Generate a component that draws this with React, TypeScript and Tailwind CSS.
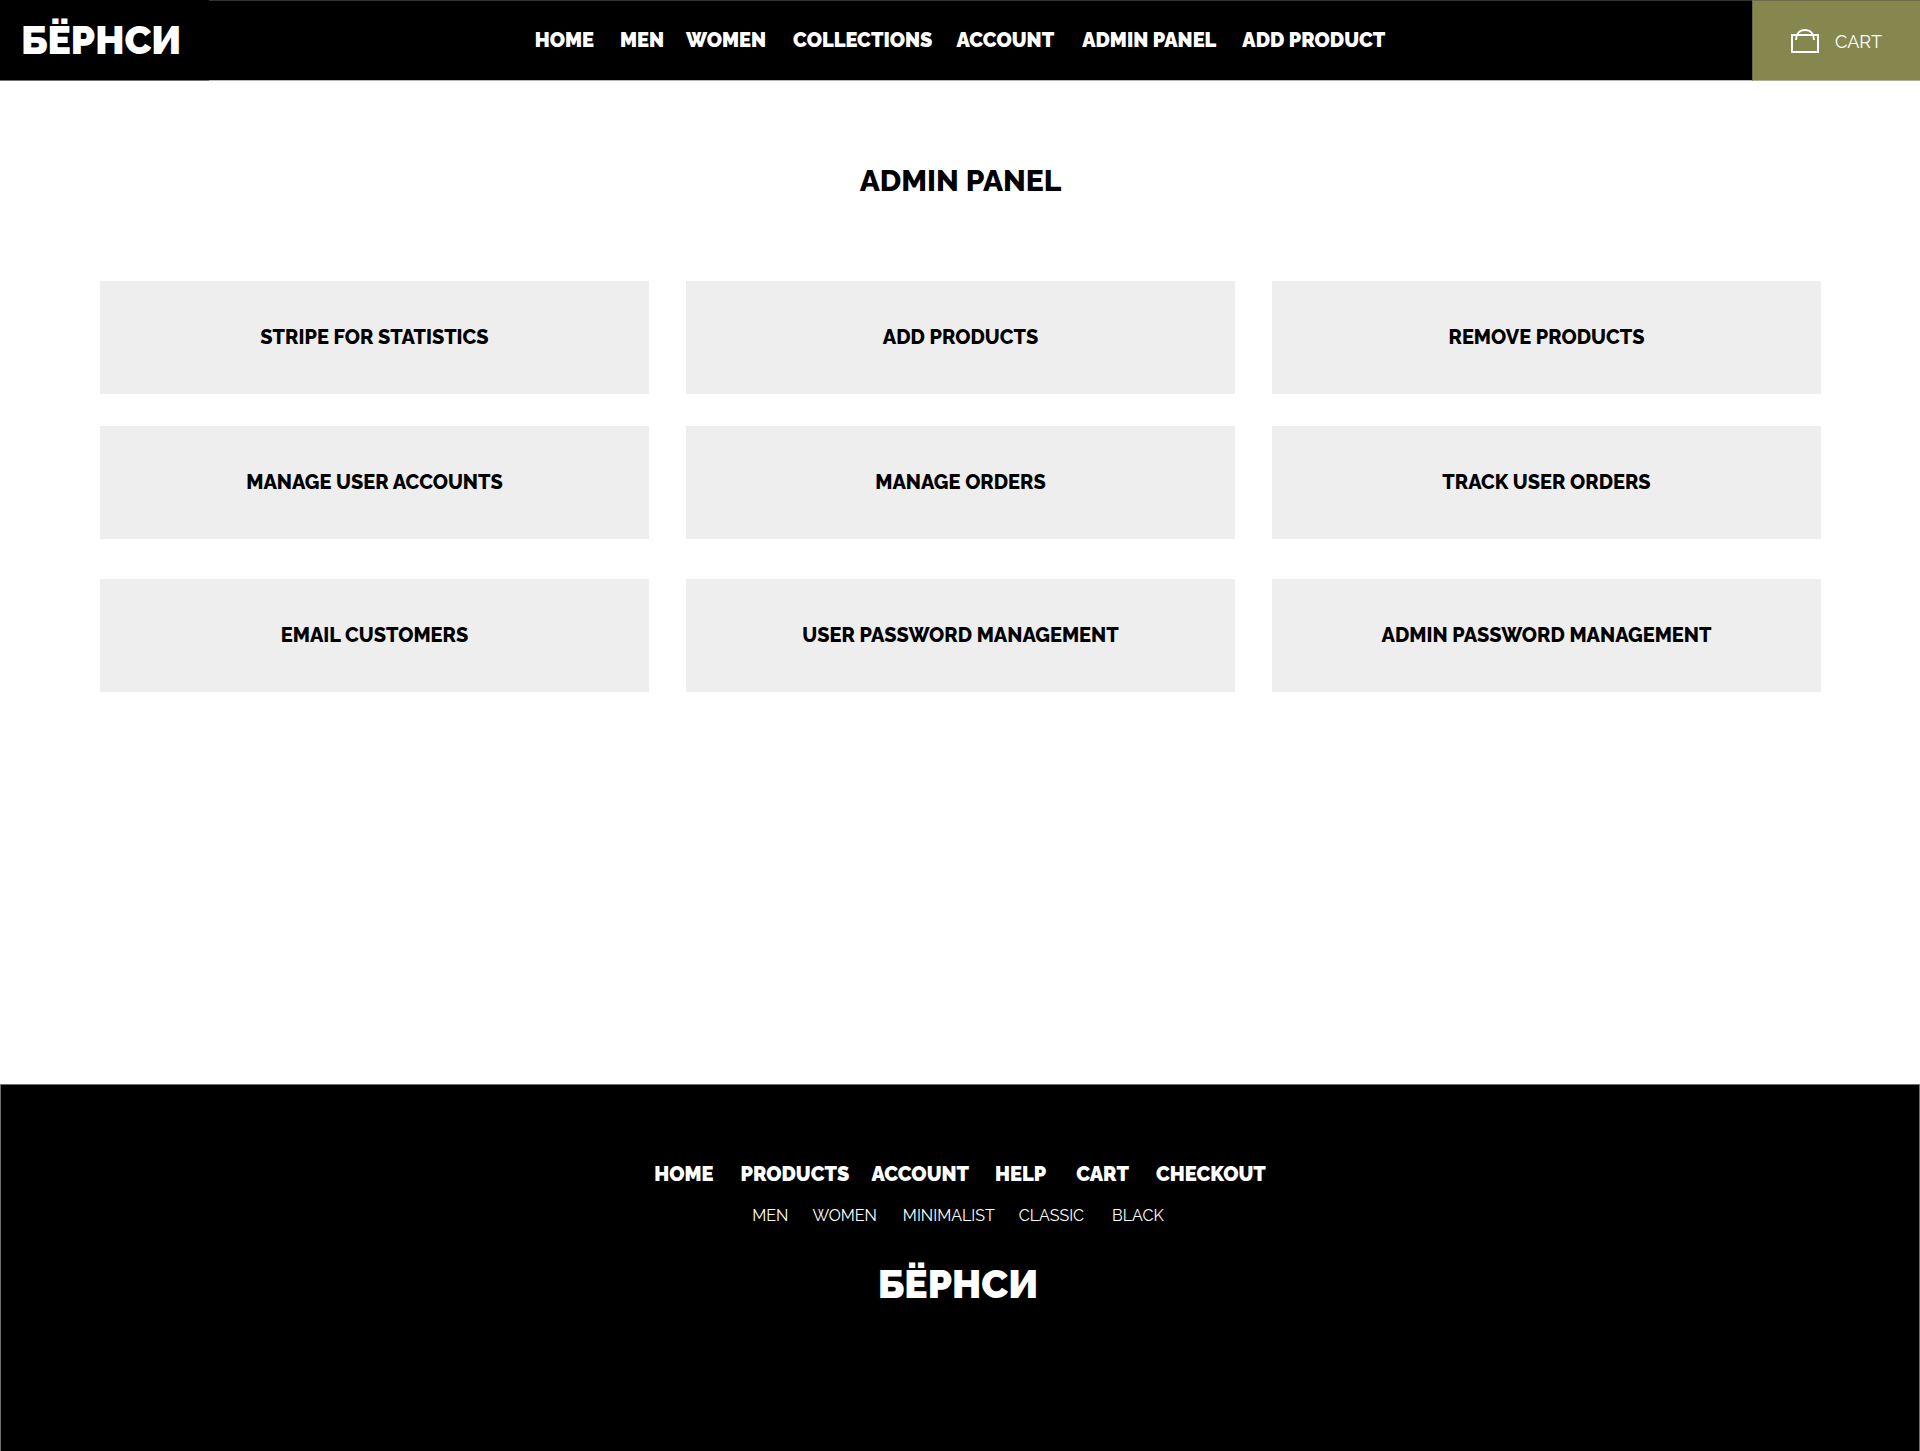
type Item = { label: string; gap: string };

const mainNav: Item[] = [
  { label: "HOME", gap: "" },
  { label: "MEN", gap: "ml-[26px]" },
  { label: "WOMEN", gap: "ml-[22px]" },
  { label: "COLLECTIONS", gap: "ml-[27px]" },
  { label: "ACCOUNT", gap: "ml-6" },
  { label: "ADMIN PANEL", gap: "ml-7" },
  { label: "ADD PRODUCT", gap: "ml-[26px]" },
];

const cardRows = [
  { spacing: "", labels: ["STRIPE FOR STATISTICS", "ADD PRODUCTS", "REMOVE PRODUCTS"] },
  { spacing: "mt-8", labels: ["MANAGE USER ACCOUNTS", "MANAGE ORDERS", "TRACK USER ORDERS"] },
  { spacing: "mt-10", labels: ["EMAIL CUSTOMERS", "USER PASSWORD MANAGEMENT", "ADMIN PASSWORD MANAGEMENT"] },
];

const footerNav: Item[] = [
  { label: "HOME", gap: "" },
  { label: "PRODUCTS", gap: "ml-[27px]" },
  { label: "ACCOUNT", gap: "ml-[22px]" },
  { label: "HELP", gap: "ml-[26px]" },
  { label: "CART", gap: "ml-[30px]" },
  { label: "CHECKOUT", gap: "ml-[27px]" },
];

const footerSubNav: Item[] = [
  { label: "MEN", gap: "" },
  { label: "WOMEN", gap: "ml-6" },
  { label: "MINIMALIST", gap: "ml-[26px]" },
  { label: "CLASSIC", gap: "ml-6" },
  { label: "BLACK", gap: "ml-7" },
];

function NavRow({ items, label, className }: { items: Item[]; label: string; className: string }) {
  return (
    <nav aria-label={label} className={`flex items-center whitespace-nowrap ${className}`}>
      {items.map((item) => (
        <a key={item.label} href="#" className={`hover:underline ${item.gap}`}>
          {item.label}
        </a>
      ))}
    </nav>
  );
}

function BagIcon() {
  return (
    <svg aria-hidden="true" width="28" height="24" viewBox="0 0 28 24" fill="none" stroke="#fff" strokeWidth="2">
      <path d="M1 6h26v17H1z" />
      <path d="M5 11C5 5 8.500 1 14 1s9 4 9 10" />
    </svg>
  );
}

export default function App() {
  return (
    <div className="flex min-h-screen flex-col bg-white font-['Raleway','Lato','Open_Sans',sans-serif] text-black">
      <header className="flex h-[81px] bg-black text-white">
        <div className="flex w-[209px] items-center border-b border-[#707070] pl-[21px]">
          <a href="#" className="text-[39px] leading-[48px] font-black">
            БЁРНСИ
          </a>
        </div>
        <div className="flex flex-1 items-center justify-center border-t border-b border-t-[#333333] border-b-[#b9b5b5] pr-[41px] pb-0.5">
          <NavRow items={mainNav} label="Main" className="text-[20px] leading-6 font-black" />
        </div>
        <a
          href="#"
          className="flex w-[168px] items-center border-t border-b border-l border-t-[#6b6b47] border-b-[#b0b09c] border-l-[#6b6b47] bg-[#86864f] pl-[38px] text-[18px] leading-6"
        >
          <BagIcon />
          <span className="pt-0.5 pl-4">CART</span>
        </a>
      </header>

      <main className="flex-1 pr-[99px] pl-[100px]">
        <h1 className="pt-[82px] text-center text-[30px] leading-9 font-extrabold">ADMIN PANEL</h1>
        <div className="mt-[82px]">
          {cardRows.map((row) => (
            <div key={row.spacing} className={`grid grid-cols-3 gap-[37px] ${row.spacing}`}>
              {row.labels.map((label) => (
                <a
                  key={label}
                  href="#"
                  className="flex h-[113px] items-center justify-center bg-[#eeeeee] pb-px text-[20px] leading-6 font-extrabold whitespace-nowrap hover:bg-[#e2e2e2]"
                >
                  {label}
                </a>
              ))}
            </div>
          ))}
        </div>
      </main>

      <footer className="flex h-[367px] flex-col items-center border-x border-t border-[#707070] bg-black pt-[77px] text-white">
        <NavRow items={footerNav} label="Footer" className="text-[20px] leading-6 font-black" />
        <div className="mt-5 flex flex-col items-center pr-1">
          <NavRow items={footerSubNav} label="Collections" className="text-[16px] leading-5" />
          <a href="#" className="mt-[34px] text-[39px] leading-[48px] font-black">
            БЁРНСИ
          </a>
        </div>
      </footer>
    </div>
  );
}
